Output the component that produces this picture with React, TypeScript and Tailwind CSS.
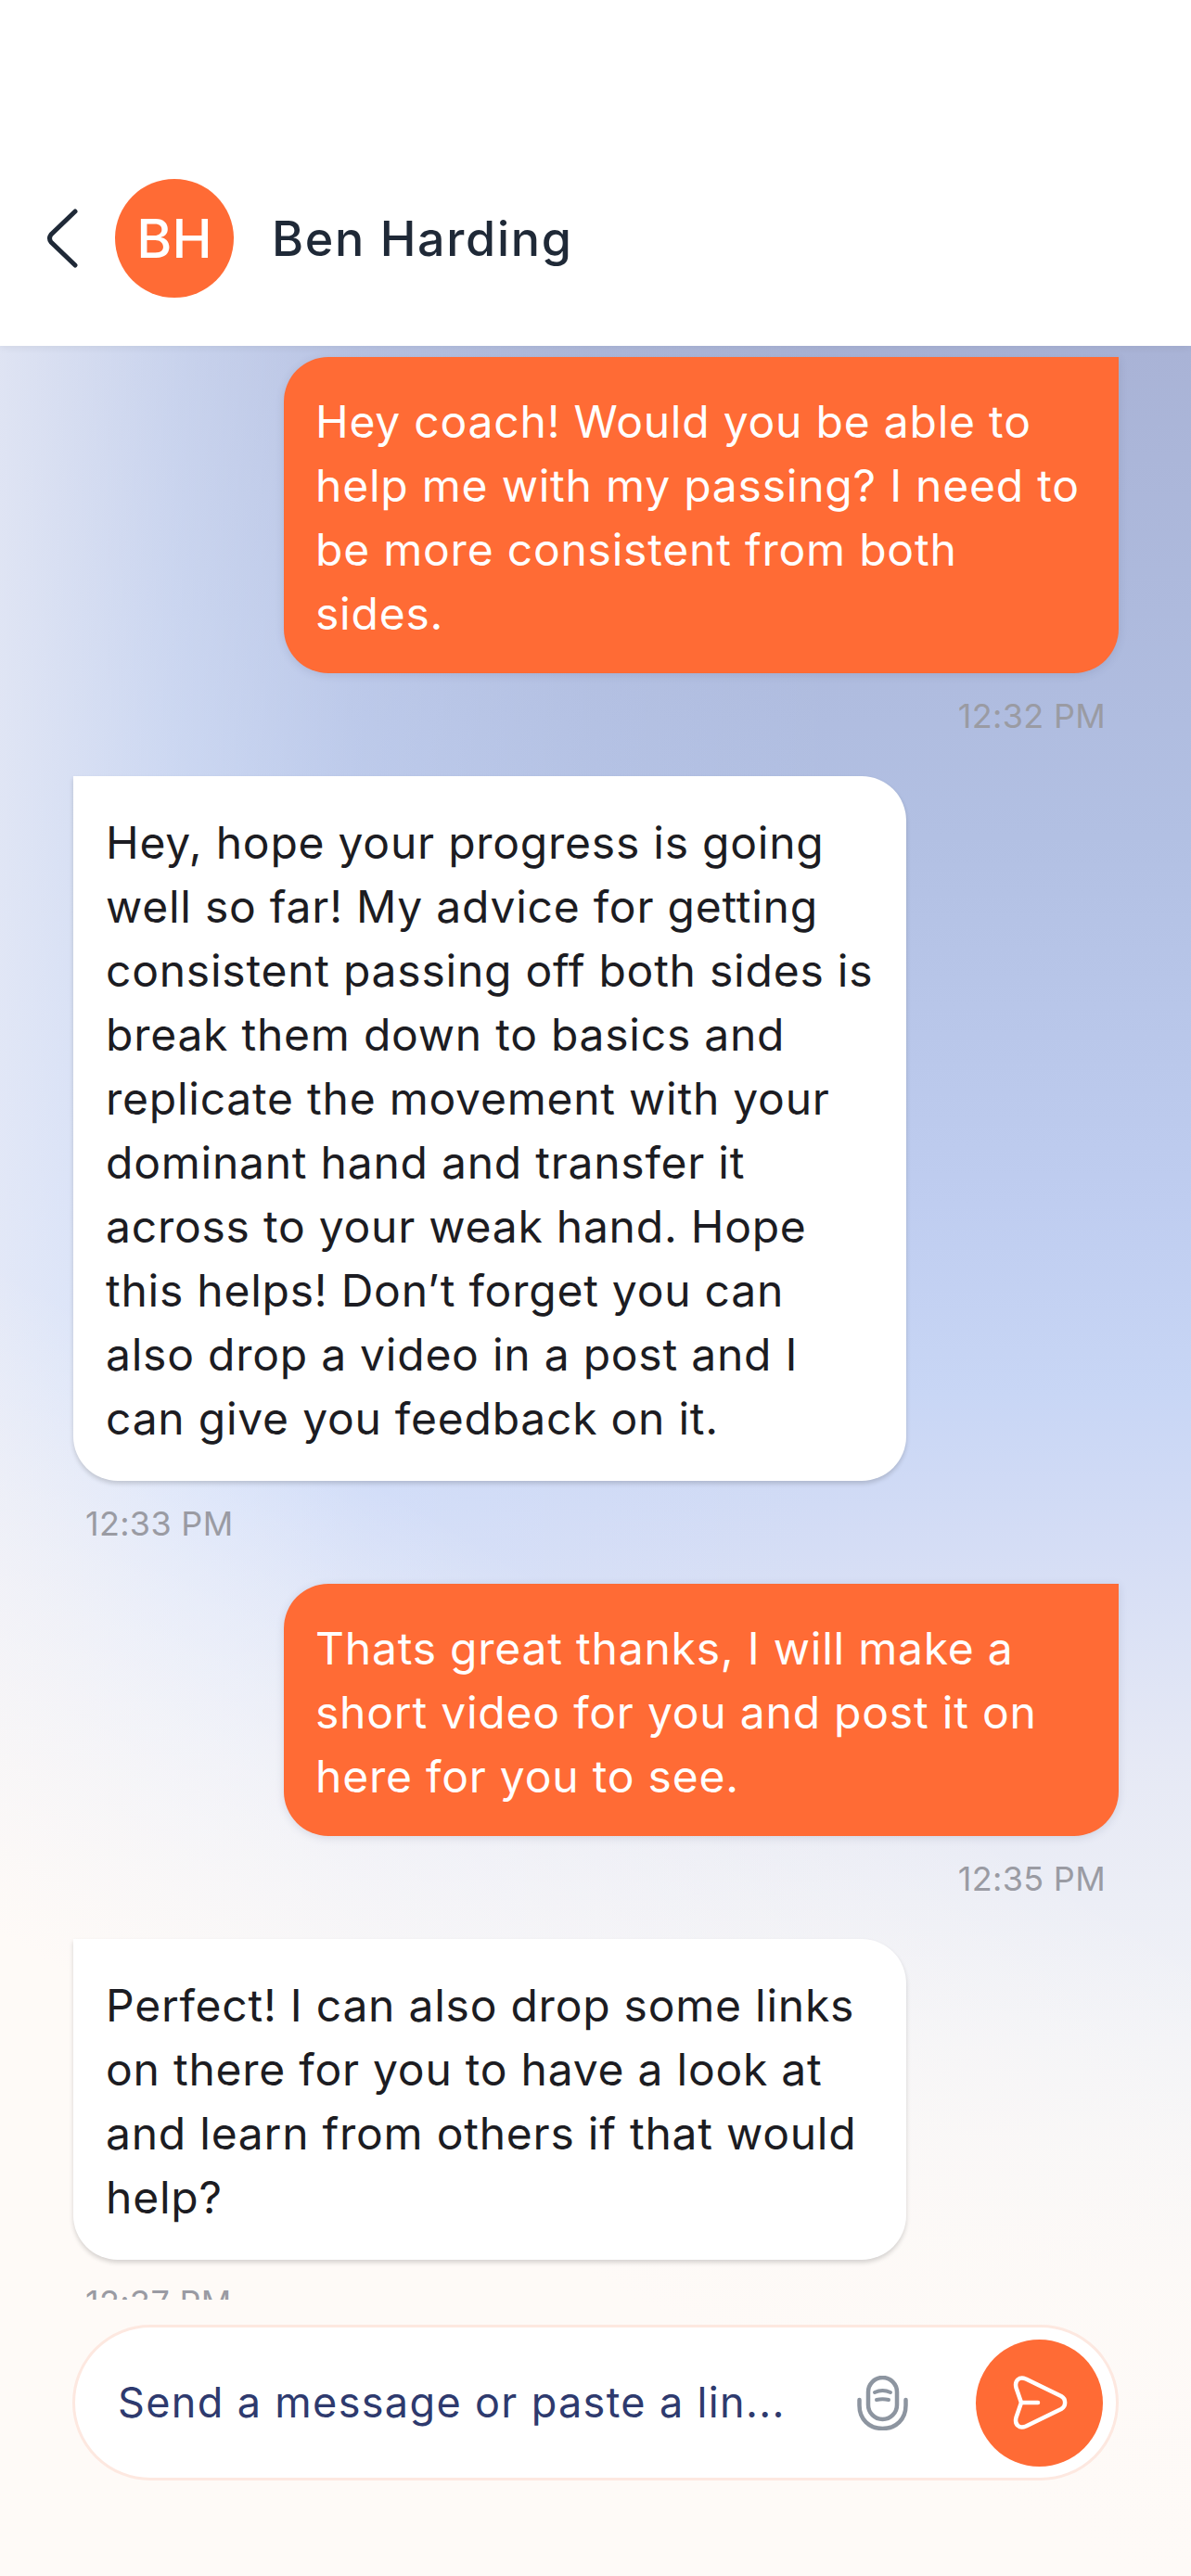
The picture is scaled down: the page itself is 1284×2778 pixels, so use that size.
const font = { fontFamily: "Inter, sans-serif" };

function Outgoing({ text, time }: { text: string[]; time: string }) {
  return (
    <div className="flex flex-col items-end">
      <div className="w-[900px] rounded-[48px] rounded-tr-none bg-[#ff6b35] px-[34px] pb-[30px] pt-[35px] text-[48px] font-[380] leading-[69px] tracking-[0.78px] text-white shadow-[0_2px_10px_rgba(60,70,110,0.15)]">
        {text.map((line) => (
          <div key={line} className="whitespace-nowrap">{line}</div>
        ))}
      </div>
      <div className="mb-[44px] mt-[25px] pr-[14px] text-[36px] leading-[42px] tracking-[0.3px] text-[#9a9ba3]">{time}</div>
    </div>
  );
}

function Incoming({ text, time }: { text: string[]; time: string }) {
  return (
    <div className="flex flex-col items-start">
      <div className="w-[898px] rounded-[48px] rounded-tl-none bg-white pb-[33px] pl-[35px] pr-6 pt-[37px] text-[48px] font-[380] leading-[69px] tracking-[0.76px] text-[#1c1c22] shadow-[0_3px_5px_rgba(0,0,0,0.16)]">
        {text.map((line) => (
          <div key={line} className="whitespace-nowrap">{line}</div>
        ))}
      </div>
      <div className="mb-[44px] mt-[25px] pl-[13px] text-[36px] leading-[42px] tracking-[0.3px] text-[#9a9ba3]">{time}</div>
    </div>
  );
}

export default function App() {
  return (
    <div className="flex h-[2778px] w-[1284px] flex-col overflow-hidden bg-white" style={font}>
      {/* Header */}
      <header className="relative z-10 flex h-[373px] shrink-0 items-center bg-white pl-[50px] pt-[141px] shadow-[0_2px_8px_rgba(0,0,0,0.06)]">
        <svg width="34" height="64" viewBox="0 0 34 64" fill="none">
          <path d="M31 3 L5 28 Q2 32 5 36 L31 61" stroke="#1f2937" strokeWidth="5" strokeLinecap="round" />
        </svg>
        <div className="ml-[40px] flex h-[128px] w-[128px] items-center justify-center rounded-full bg-[#ff6b35] text-[58px] font-medium text-white">
          BH
        </div>
        <div className="ml-[41px] pt-[2px] text-[52px] font-medium leading-[60px] tracking-[1.7px] text-[#1f2937]">
          Ben Harding
        </div>
      </header>

      <div className="flex min-h-0 flex-1 flex-col bg-[linear-gradient(30deg,rgba(254,250,247,1)_22%,rgba(254,250,247,0)_45%),linear-gradient(to_right,rgba(232,236,248,0.85)_0%,rgba(226,236,255,0.55)_15%,rgba(215,228,255,0.32)_30%,rgba(215,228,255,0.1)_50%,rgba(215,228,255,0)_70%),linear-gradient(to_bottom,#a9b3d6_0%,#b2c0e3_22%,#bfcdf0_38.5%,#c8d6f5_47%,#d3dcf5_53%,#e6e9f5_63.5%,#f2f3f7_76%,#fcf9f7_88.5%,#fefaf7_100%)]">
        {/* Messages */}
        <div className="min-h-0 flex-1 overflow-hidden pl-[79px] pr-[78px] pt-3">
          <Outgoing
            time="12:32 PM"
            text={[
              "Hey coach! Would you be able to",
              "help me with my passing? I need to",
              "be more consistent from both",
              "sides.",
            ]}
          />
          <Incoming
            time="12:33 PM"
            text={[
              "Hey, hope your progress is going",
              "well so far! My advice for getting",
              "consistent passing off both sides is",
              "break them down to basics and",
              "replicate the movement with your",
              "dominant hand and transfer it",
              "across to your weak hand. Hope",
              "this helps! Don’t forget you can",
              "also drop a video in a post and I",
              "can give you feedback on it.",
            ]}
          />
          <Outgoing
            time="12:35 PM"
            text={[
              "Thats great thanks, I will make a",
              "short video for you and post it on",
              "here for you to see.",
            ]}
          />
          <Incoming
            time="12:37 PM"
            text={[
              "Perfect! I can also drop some links",
              "on there for you to have a look at",
              "and learn from others if that would",
              "help?",
            ]}
          />
        </div>

        {/* Composer */}
        <div className="h-[298px] shrink-0 px-[78px] pt-[27px]">
          <div className="flex h-[168px] items-center rounded-full border-[3px] border-[#fde8e0] bg-white pl-[46px] pr-[14px]">
            <div className="flex-1 whitespace-nowrap text-[45px] font-[380] tracking-[1.35px] text-[#2e3a6e]">
              Send a message or paste a lin...
            </div>
            <svg width="55" height="59" viewBox="0 0 55 59" fill="none" stroke="#8d95a0" strokeLinecap="round" className="mr-[73px]">
              <rect x="12" y="2" width="31" height="45" rx="15.5" strokeWidth="4.5" />
              <path d="M2.5 26 V32 C2.5 47 13 57 27.5 57 C42 57 52.5 47 52.5 32 V26" strokeWidth="4.5" />
              <path d="M19 18 Q27.5 14 36 18" strokeWidth="4" />
              <path d="M21 26 Q27.5 24.5 34 26" strokeWidth="4" />
            </svg>
            <div className="flex h-[137px] w-[137px] shrink-0 items-center justify-center rounded-full bg-[#ff6b35]">
              <svg width="60" height="60" viewBox="0 0 60 60" fill="none" stroke="white" strokeWidth="4.5" strokeLinecap="round" strokeLinejoin="round">
                <path d="M10 30 L4.5 14 C2.5 6 8 1.5 15 4.5 L53 23 C58.5 26 58.5 34 53 37 L15 55.5 C8 58.5 2.5 54 4.5 46 Z" />
                <path d="M10 30 H28" />
              </svg>
            </div>
          </div>
        </div>
      </div>
    </div>
  );
}
